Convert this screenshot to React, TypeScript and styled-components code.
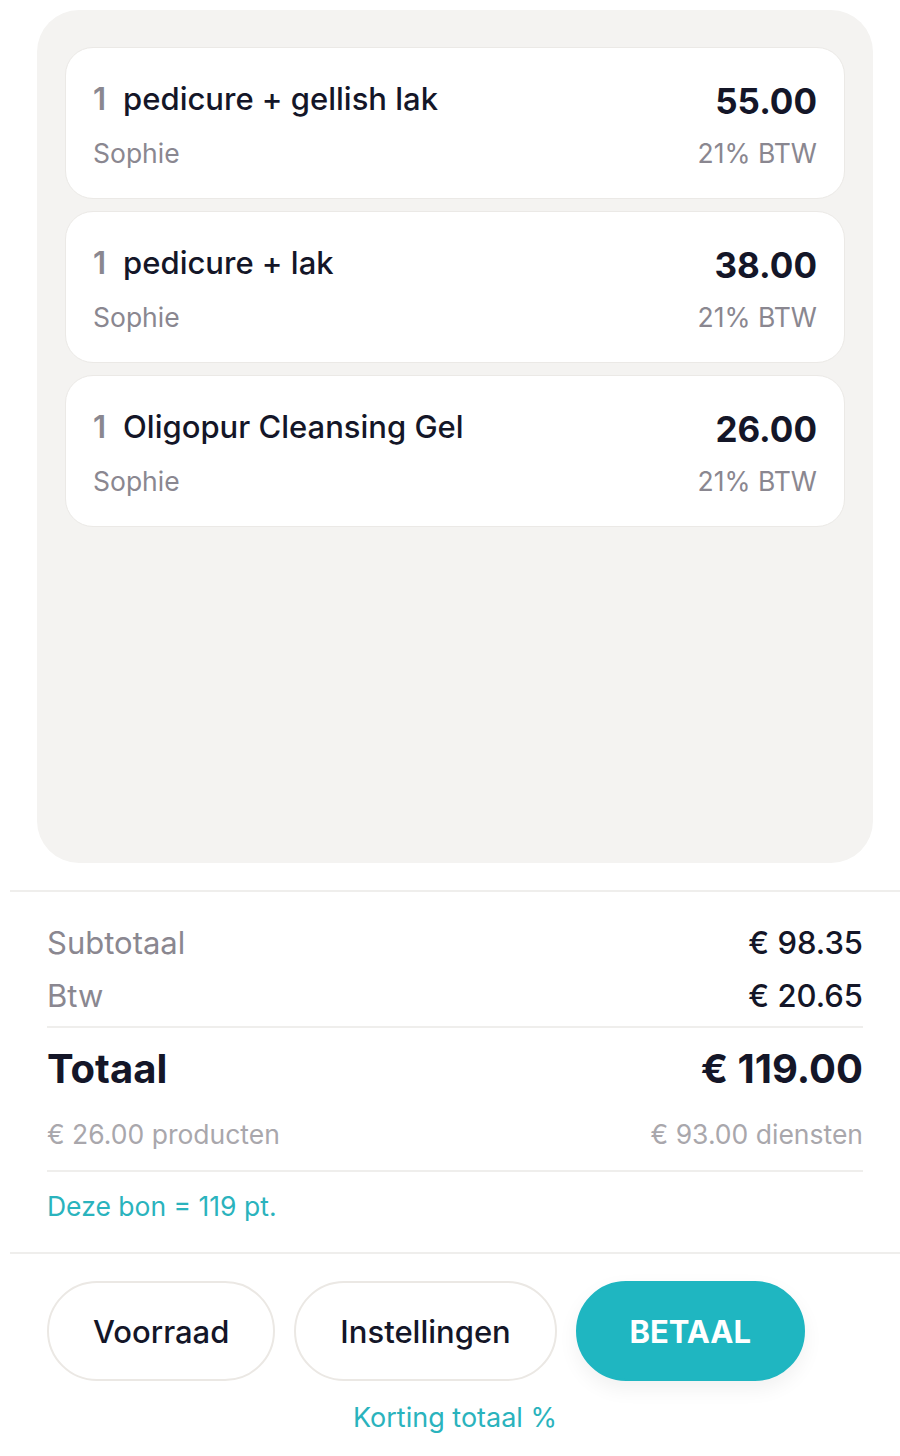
import styled, { createGlobalStyle } from "styled-components";

const items = [
   { qty: 1, name: "pedicure + gellish lak", staff: "Sophie", price: "55.00", vat: "21% BTW" },
   { qty: 1, name: "pedicure + lak", staff: "Sophie", price: "38.00", vat: "21% BTW" },
   { qty: 1, name: "Oligopur Cleansing Gel", staff: "Sophie", price: "26.00", vat: "21% BTW" },
];

const GlobalStyle = createGlobalStyle`
   html, body {
      margin: 0;
      padding: 0;
      background: #fff;
      font-family: Inter, "Noto Sans", sans-serif;
      color: #141628;
   }
`;

function App() {
   return (
      <>
         <GlobalStyle />
         <Page>
            <CartPanel>
               {items.map((item) => (
                  <ItemCard key={item.name}>
                     <ItemRow>
                        <ItemTitle>
                           <Qty>{item.qty}</Qty>
                           {item.name}
                        </ItemTitle>
                        <Price>{item.price}</Price>
                     </ItemRow>
                     <ItemRow>
                        <Muted>{item.staff}</Muted>
                        <Muted>{item.vat}</Muted>
                     </ItemRow>
                  </ItemCard>
               ))}
            </CartPanel>

            <Divider />

            <Summary>
               <SumRow>
                  <SumLabel>Subtotaal</SumLabel>
                  <SumValue>€ 98.35</SumValue>
               </SumRow>
               <SumRow>
                  <SumLabel>Btw</SumLabel>
                  <SumValue>€ 20.65</SumValue>
               </SumRow>
               <InnerLine $top={4} />
               <TotalRow>
                  <span>Totaal</span>
                  <span>€ 119.00</span>
               </TotalRow>
               <SplitRow>
                  <span>€ 26.00 producten</span>
                  <span>€ 93.00 diensten</span>
               </SplitRow>
               <InnerLine />
               <Points>Deze bon = 119 pt.</Points>
            </Summary>

            <Divider />

            <Actions>
               <Button>Voorraad</Button>
               <Button>Instellingen</Button>
               <Button primary>BETAAL</Button>
            </Actions>
            <Discount>Korting totaal %</Discount>
         </Page>
      </>
   );
}

export default App;

const Page = styled.div`
   width: 900px;
   min-height: 1456px;
   padding-top: 10px;
   box-sizing: border-box;
   display: flex;
   flex-direction: column;
`;

const CartPanel = styled.div`
   margin: 0 27px 0 37px;
   height: 853px;
   box-sizing: border-box;
   background: #f4f3f1;
   border-radius: 42px;
   padding: 37px 28px;
   display: flex;
   flex-direction: column;
   gap: 12px;
`;

const ItemCard = styled.div`
   background: #fff;
   border: 1px solid #ebe9e6;
   border-radius: 28px;
   height: 152px;
   box-sizing: border-box;
   padding: 29px 27px 0 27px;
   display: flex;
   flex-direction: column;
   gap: 16px;
`;

const ItemRow = styled.div`
   display: flex;
   justify-content: space-between;
   align-items: center;
`;

const ItemTitle = styled.div`
   font-size: 31px;
   font-weight: 500;
   color: #141628;
   line-height: 40px;
`;

const Qty = styled.span`
   color: #8a8790;
   font-weight: 600;
   margin-right: 17px;
`;

const Price = styled.div`
   font-size: 35px;
   font-weight: 700;
   color: #141628;
   line-height: 40px;
   margin-top: 4px;
`;

const Muted = styled.span`
   font-size: 26.5px;
   color: #8a8790;
   line-height: 32px;
`;

const Divider = styled.div`
   margin: 27px 0 0 10px;
   height: 2px;
   background: #efeeec;
`;

const Summary = styled.div`
   padding: 24px 37px 0 47px;
   display: flex;
   flex-direction: column;
`;

const SumRow = styled.div`
   display: flex;
   justify-content: space-between;
   align-items: center;
   height: 53px;
   font-size: 31px;
`;

const SumLabel = styled.span`
   color: #8a8790;
`;

const SumValue = styled.span`
   color: #141628;
   font-weight: 500;
`;

const InnerLine = styled.div<{ $top?: number }>`
   height: 2px;
   margin-top: ${({ $top }) => $top ?? 0}px;
   background: #efeeec;
`;

const TotalRow = styled.div`
   display: flex;
   justify-content: space-between;
   align-items: center;
   height: 80px;
   font-size: 40px;
   font-weight: 700;
   color: #141628;
`;

const SplitRow = styled.div`
   display: flex;
   justify-content: space-between;
   align-items: center;
   height: 52px;
   margin-bottom: 10px;
   font-size: 26.5px;
   color: #a9a7ac;
`;

const Points = styled.div`
   font-size: 26.5px;
   color: #2ab3bd;
   line-height: 34px;
   padding: 17px 0 2px;
`;

const Actions = styled.div`
   display: flex;
   gap: 19px;
   padding: 27px 0 0 47px;
`;

const Button = styled.button<{ primary?: boolean }>`
   font-family: Inter, "Noto Sans", sans-serif;
   height: 100px;
   border-radius: 50px;
   font-size: 31px;
   cursor: pointer;
   padding: 0 44px;
   background: ${({ primary }) => (primary ? "#1fb6c1" : "#fff")};
   color: ${({ primary }) => (primary ? "#fff" : "#141628")};
   font-weight: ${({ primary }) => (primary ? 700 : 500)};
   border: 2px solid ${({ primary }) => (primary ? "#1fb6c1" : "#ebe8e4")};
   box-shadow: ${({ primary }) => (primary ? "0 8px 20px rgba(0,0,0,0.06)" : "none")};
   min-width: ${({ primary }) => (primary ? "229px" : "auto")};
`;

const Discount = styled.div`
   text-align: center;
   font-size: 27px;
   color: #2ab3bd;
   margin-top: 20px;
   width: 910px;
`;
